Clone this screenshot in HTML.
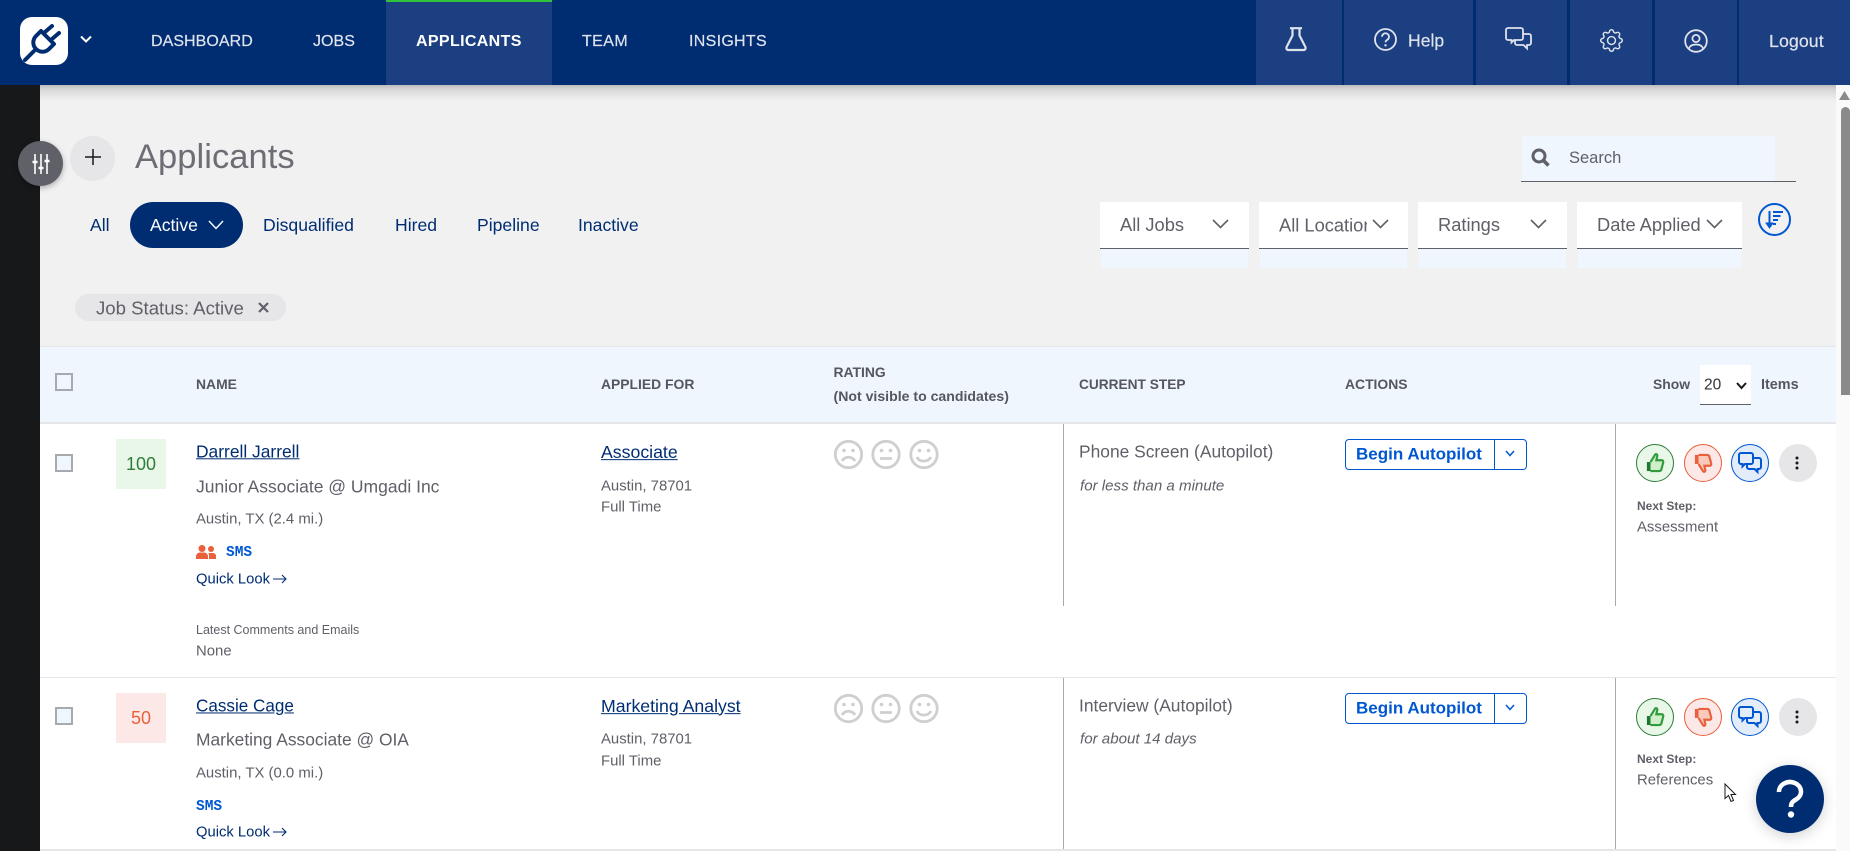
<!DOCTYPE html>
<html><head><meta charset="utf-8"><title>Applicants</title>
<style>
html,body{margin:0;padding:0;width:1850px;height:851px;overflow:hidden;background:#f1f1f1;font-family:"Liberation Sans",sans-serif;color:#5f6068}
.a{position:absolute}
.t{position:absolute;white-space:nowrap;line-height:1;transform:translateY(-50%)}
.n{font-size:16px;color:#dfe3ec;top:42px;letter-spacing:.05px;-webkit-text-stroke:.2px #dfe3ec}
.tab{font-size:17.6px;color:#002d72;top:225.5px}
.dd{position:absolute;top:202px;height:46px;background:#fff;border-bottom:1px solid #5f6068}
.pale{position:absolute;top:249px;height:19px;background:#f0f6fe}
.dt{font-size:18.3px;top:225px;color:#5f6068}
.th{font-size:13.9px;font-weight:bold;color:#55565e}
.lnk{color:#002d72;text-decoration:underline;font-size:17.4px}
.sub{font-size:14.9px;color:#5f6068;margin-top:1px}
.cb{position:absolute;left:55px;width:14px;height:14px;border:2px solid #a8a9ad;background:#f0f6fe}
.sc{position:absolute;left:116px;width:50px;height:50px;line-height:50px;text-align:center;font-size:18px}
.vl{position:absolute;width:1px;background:#a8a9ad}
.sms{font-size:14.5px;font-weight:bold;color:#0057d2;font-family:"Liberation Mono",monospace}
.btn{position:absolute;left:1345px;width:180px;height:29px;border:1.5px solid #0057d2;border-radius:4px;background:#fff;box-sizing:content-box}
svg{position:absolute;display:block;overflow:visible}
.c{position:absolute;width:36px;height:36px;border-radius:50%;border:1.5px solid}
</style></head><body>

<!-- sidebar / header -->
<div class="a" style="left:0;top:85px;width:1850px;height:16px;background:linear-gradient(#bdbdbd,#d9d9d9 30%,#f1f1f1);"></div>
<div class="a" style="left:0;top:85px;width:40px;height:766px;background:#17181a"></div>
<div class="a" style="left:0;top:0;width:1850px;height:85px;background:#002d72"></div>
<div class="a" style="left:386px;top:0;width:166px;height:85px;background:#1b3f80"></div>
<div class="a" style="left:386px;top:0;width:166px;height:2px;background:#2fc23b"></div>
<div class="a" style="left:1256px;top:0;width:594px;height:85px;background:#1b3f80"></div>
<div class="a" style="left:1342px;top:0;width:2px;height:85px;background:#002d72"></div>
<div class="a" style="left:1473px;top:0;width:3px;height:85px;background:#002d72"></div>
<div class="a" style="left:1567px;top:0;width:3px;height:85px;background:#002d72"></div>
<div class="a" style="left:1652px;top:0;width:3px;height:85px;background:#002d72"></div>
<div class="a" style="left:1737px;top:0;width:2px;height:85px;background:#002d72"></div>

<!-- logo -->
<svg style="left:20px;top:17px" width="48" height="48" viewBox="0 0 48 48"><rect width="48" height="48" rx="12" fill="#fff"/><g fill="none" stroke="#002d72" stroke-width="4" stroke-linecap="round" stroke-linejoin="round"><path d="M21 14L34 27L29 32A9 9 0 0 1 16 19Z"/><path d="M25 15L32 9M32 22L39 16M14 34L5 43"/></g></svg>
<svg style="left:80px;top:35px" width="12" height="8" viewBox="0 0 12 8"><path d="M1 1.5L6 6.5L11 1.5" fill="none" stroke="#fff" stroke-width="2"/></svg>

<span class="t n" style="left:151px">DASHBOARD</span>
<span class="t n" style="left:313px">JOBS</span>
<span class="t n" style="left:416px;color:#fff;font-weight:bold;letter-spacing:.35px;-webkit-text-stroke:0">APPLICANTS</span>
<span class="t n" style="left:582px;letter-spacing:.4px">TEAM</span>
<span class="t n" style="left:689px;letter-spacing:.3px">INSIGHTS</span>

<!-- header icons -->
<svg style="left:1285px;top:27px" width="22" height="24" viewBox="0 0 22 24"><path d="M5 1.2H17M7.5 1.2V8.5L1.6 20A2 2 0 0 0 3.4 23H18.6A2 2 0 0 0 20.4 20L14.5 8.5V1.2" fill="none" stroke="#dfe3ec" stroke-width="2.2"/></svg>
<svg style="left:1374px;top:28px" width="23" height="23" viewBox="0 0 23 23"><circle cx="11.5" cy="11.5" r="10.5" fill="none" stroke="#dfe3ec" stroke-width="1.8"/><path d="M8 8.8A3.5 3.5 0 1 1 13.3 11.8C12.2 12.5 11.5 13 11.5 14.3" fill="none" stroke="#dfe3ec" stroke-width="1.8"/><circle cx="11.5" cy="17.3" r="1.2" fill="#dfe3ec"/></svg>
<span class="t n" style="left:1408px;font-size:17.5px;top:41px">Help</span>
<svg style="left:1505px;top:27px" width="27" height="23" viewBox="0 0 27 23"><path d="M3 1H16A2 2 0 0 1 18 3V11A2 2 0 0 1 16 13H9L6.5 15.5V13H3A2 2 0 0 1 1 11V3A2 2 0 0 1 3 1Z" fill="none" stroke="#dfe3ec" stroke-width="1.8"/><path d="M18 7H24A2 2 0 0 1 26 9V16A2 2 0 0 1 24 18H22V21.5L18.5 18H12A2 2 0 0 1 10 16V13.5" fill="none" stroke="#dfe3ec" stroke-width="1.8"/></svg>
<svg style="left:1600px;top:29px" width="23" height="23" viewBox="0 0 16 16" fill="#dfe3ec"><path d="M8 4.754a3.246 3.246 0 1 0 0 6.492 3.246 3.246 0 0 0 0-6.492zM5.754 8a2.246 2.246 0 1 1 4.492 0 2.246 2.246 0 0 1-4.492 0z"/><path d="M9.796 1.343c-.527-1.79-3.065-1.79-3.592 0l-.094.319a.873.873 0 0 1-1.255.52l-.292-.16c-1.64-.892-3.433.902-2.54 2.541l.159.292a.873.873 0 0 1-.52 1.255l-.319.094c-1.79.527-1.79 3.065 0 3.592l.319.094a.873.873 0 0 1 .52 1.255l-.16.292c-.892 1.64.901 3.434 2.541 2.54l.292-.159a.873.873 0 0 1 1.255.52l.094.319c.527 1.79 3.065 1.79 3.592 0l.094-.319a.873.873 0 0 1 1.255-.52l.292.16c1.64.893 3.434-.902 2.54-2.541l-.159-.292a.873.873 0 0 1 .52-1.255l.319-.094c1.79-.527 1.79-3.065 0-3.592l-.319-.094a.873.873 0 0 1-.52-1.255l.16-.292c.893-1.64-.902-3.433-2.541-2.54l-.292.159a.873.873 0 0 1-1.255-.52l-.094-.319zm-2.633.283c.246-.835 1.428-.835 1.674 0l.094.319a1.873 1.873 0 0 0 2.693 1.115l.291-.16c.764-.415 1.6.42 1.184 1.185l-.159.292a1.873 1.873 0 0 0 1.116 2.692l.318.094c.835.246.835 1.428 0 1.674l-.319.094a1.873 1.873 0 0 0-1.115 2.693l.16.291c.415.764-.42 1.6-1.185 1.184l-.291-.159a1.873 1.873 0 0 0-2.693 1.116l-.094.318c-.246.835-1.428.835-1.674 0l-.094-.319a1.873 1.873 0 0 0-2.692-1.115l-.292.16c-.764.415-1.6-.42-1.184-1.185l.159-.291A1.873 1.873 0 0 0 1.945 8.93l-.319-.094c-.835-.246-.835-1.428 0-1.674l.319-.094A1.873 1.873 0 0 0 3.06 4.377l-.16-.292c-.415-.764.42-1.6 1.185-1.184l.292.159a1.873 1.873 0 0 0 2.692-1.115l.094-.319z"/></svg>
<svg style="left:1684px;top:29px" width="24" height="24" viewBox="0 0 24 24" fill="none" stroke="#dfe3ec" stroke-width="1.8"><circle cx="12" cy="12" r="10.8"/><circle cx="12" cy="9.5" r="3.6"/><path d="M5 19.5C6 16 9 15.5 12 15.5S18 16 19 19.5"/></svg>
<span class="t n" style="left:1769px;font-size:17.8px">Logout</span>

<!-- page title -->
<div class="a" style="left:70px;top:136px;width:45px;height:45px;border-radius:50%;background:#e6e6e8"></div>
<svg style="left:85px;top:149px" width="16" height="16"><path d="M8 0V16M0 8H16" stroke="#17181a" stroke-width="1.5"/></svg>
<div class="a" style="left:18px;top:141px;width:45px;height:45px;border-radius:50%;background:#5f6068;box-shadow:0 2px 6px rgba(0,0,0,.3)"></div>
<svg style="left:32px;top:154px" width="18" height="20" viewBox="0 0 18 20"><path d="M3 0V20M9 0V20M15 0V20" stroke="#fff" stroke-width="1.6"/><path d="M0.5 8H5.5M6.5 14H11.5M12.5 7H17.5" stroke="#fff" stroke-width="2.4"/></svg>
<span class="t" style="left:135px;top:157px;font-size:34.5px;color:#6d6e75;letter-spacing:.05px">Applicants</span>

<!-- tabs -->
<span class="t tab" style="left:90px">All</span>
<div class="a" style="left:130px;top:202px;width:113px;height:46px;border-radius:23px;background:#002d72"></div>
<span class="t tab" style="left:150px;color:#fff">Active</span>
<svg style="left:208px;top:220px" width="16" height="10" viewBox="0 0 16 10"><path d="M1 1L8 8.5L15 1" fill="none" stroke="#fff" stroke-width="1.4"/></svg>
<span class="t tab" style="left:263px">Disqualified</span>
<span class="t tab" style="left:395px">Hired</span>
<span class="t tab" style="left:477px">Pipeline</span>
<span class="t tab" style="left:578px">Inactive</span>

<!-- search -->
<div class="a" style="left:1522px;top:136px;width:253px;height:45px;background:#f0f6fe"></div>
<div class="a" style="left:1521px;top:181px;width:275px;height:1px;background:#5f6068"></div>
<svg style="left:1531px;top:148px" width="19" height="19" viewBox="0 0 19 19" fill="none" stroke="#5f6068"><circle cx="8" cy="8" r="6" stroke-width="3"/><path d="M12.5 12.5L17.5 17.5" stroke-width="3.6"/></svg>
<span class="t" style="left:1569px;top:158px;font-size:16.5px">Search</span>

<!-- dropdowns -->
<div class="dd" style="left:1100px;width:149px"></div><div class="pale" style="left:1101px;width:147px"></div>
<div class="dd" style="left:1259px;width:149px"></div><div class="pale" style="left:1260px;width:147px"></div>
<div class="dd" style="left:1418px;width:149px"></div><div class="pale" style="left:1419px;width:147px"></div>
<div class="dd" style="left:1577px;width:165px"></div><div class="pale" style="left:1578px;width:163px"></div>
<span class="t dt" style="left:1120px">All Jobs</span>
<span class="t dt" style="left:1279px;width:88px;overflow:hidden;padding-bottom:3px;margin-top:1.5px">All Locations</span>
<span class="t dt" style="left:1438px">Ratings</span>
<span class="t dt" style="left:1597px">Date Applied</span>
<svg style="left:1212px;top:219px" width="17" height="10" viewBox="0 0 17 10"><path d="M1 1L8.5 8.5L16 1" fill="none" stroke="#5f6068" stroke-width="1.6"/></svg>
<svg style="left:1372px;top:219px" width="17" height="10" viewBox="0 0 17 10"><path d="M1 1L8.5 8.5L16 1" fill="none" stroke="#5f6068" stroke-width="1.6"/></svg>
<svg style="left:1530px;top:219px" width="17" height="10" viewBox="0 0 17 10"><path d="M1 1L8.5 8.5L16 1" fill="none" stroke="#5f6068" stroke-width="1.6"/></svg>
<svg style="left:1706px;top:219px" width="17" height="10" viewBox="0 0 17 10"><path d="M1 1L8.5 8.5L16 1" fill="none" stroke="#5f6068" stroke-width="1.6"/></svg>
<svg style="left:1758px;top:203px" width="33" height="33" viewBox="0 0 33 33" fill="none" stroke="#0057d2"><circle cx="16.5" cy="16.5" r="15.5" stroke-width="2"/><path d="M11.5 8V23" stroke-width="2"/><path d="M8 20L11.5 25L15 20Z" fill="#0057d2" stroke-width="1"/><path d="M15 9H25M15 13H22.5M15 17H20M15 21H18" stroke-width="2"/></svg>

<!-- chip -->
<div class="a" style="left:75px;top:294px;width:211px;height:27px;border-radius:14px;background:#e6e6e8"></div>
<span class="t" style="left:96px;top:308.5px;font-size:18.6px">Job Status: Active</span>
<svg style="left:258px;top:302px" width="11" height="11" viewBox="0 0 11 11"><path d="M1 1L10 10M10 1L1 10" stroke="#5f6068" stroke-width="2.2"/></svg>

<!-- table -->
<div class="a" style="left:40px;top:346px;width:1796px;height:505px;background:#fff"></div>
<div class="a" style="left:40px;top:346px;width:1796px;height:1px;background:#e6e6e8"></div>
<div class="a" style="left:40px;top:347px;width:1796px;height:75px;background:#f0f6fe"></div>
<div class="a" style="left:40px;top:422px;width:1796px;height:2px;background:#e6e6e8"></div>
<div class="a" style="left:40px;top:677px;width:1796px;height:1px;background:#e6e6e8"></div>
<div class="a" style="left:40px;top:849px;width:1796px;height:2px;background:#e6e6e8"></div>

<div class="cb" style="top:373px"></div>
<span class="t th" style="left:196px;top:384.5px">NAME</span>
<span class="t th" style="left:601px;top:384.5px">APPLIED FOR</span>
<span class="t th" style="left:833.5px;top:372.5px">RATING</span>
<span class="t th" style="left:833.5px;top:396px;font-size:14.1px">(Not visible to candidates)</span>
<span class="t th" style="left:1079px;top:384.5px;font-size:13.7px">CURRENT STEP</span>
<span class="t th" style="left:1345px;top:384.5px">ACTIONS</span>
<span class="t th" style="left:1653px;top:384.5px">Show</span>
<div class="a" style="left:1700px;top:365px;width:51px;height:39px;background:#fff;border-bottom:1px solid #5f6068"></div>
<span class="t" style="left:1704px;top:385px;font-size:15.5px;color:#333">20</span>
<svg style="left:1736px;top:382px" width="11" height="8" viewBox="0 0 11 8"><path d="M1 1L5.5 6L10 1" fill="none" stroke="#17181a" stroke-width="2"/></svg>
<span class="t th" style="left:1761px;top:384.5px;font-size:14.4px">Items</span>

<!-- vertical lines -->
<div class="vl" style="left:1063px;top:424px;height:182px"></div>
<div class="vl" style="left:1615px;top:424px;height:182px"></div>
<div class="vl" style="left:1063px;top:678px;height:171px"></div>
<div class="vl" style="left:1615px;top:678px;height:171px"></div>

<!-- row 1 -->
<div class="cb" style="top:454px"></div>
<div class="sc" style="top:439px;background:#e8f7e8;color:#2f7d3c">100</div>
<span class="t lnk" style="left:196px;top:452px">Darrell Jarrell</span>
<span class="t" style="left:196px;top:487px;font-size:17.5px">Junior Associate @ Umgadi Inc</span>
<span class="t sub" style="left:196px;top:519px">Austin, TX (2.4 mi.)</span>
<svg style="left:196px;top:545px" width="20" height="14" viewBox="0 0 20 14" fill="#e8603c"><circle cx="6" cy="3.5" r="3.5"/><circle cx="15" cy="4" r="3"/><path d="M0 14V11A4 4 0 0 1 4 7.5H8A4 4 0 0 1 12 11V14Z"/><path d="M13 14V10.5C13 9.5 12.8 8.8 12.3 8.2L13 8H17A3 3 0 0 1 20 11V14Z"/></svg>
<span class="t sms" style="left:226px;top:553px">SMS</span>
<span class="t" style="left:196px;top:579.5px;font-size:14.8px;color:#002d72">Quick Look</span>
<svg style="left:273px;top:574px" width="14" height="10" viewBox="0 0 14 10"><path d="M0 5H13M9 1L13 5L9 9" fill="none" stroke="#002d72" stroke-width="1.1"/></svg>
<span class="t" style="left:196px;top:630px;font-size:12.5px">Latest Comments and Emails</span>
<span class="t sub" style="left:196px;top:651px">None</span>
<span class="t lnk" style="left:601px;top:452.5px;font-size:17.7px">Associate</span>
<span class="t sub" style="left:601px;top:486px">Austin, 78701</span>
<span class="t sub" style="left:601px;top:507px">Full Time</span>
<svg style="left:834px;top:440px" width="105" height="29" viewBox="0 0 105 29" fill="none" stroke="#cfcfcf" stroke-width="2.8"><circle cx="14.5" cy="14.5" r="13.2"/><circle cx="52" cy="14.5" r="13.2"/><circle cx="90" cy="14.5" r="13.2"/><path d="M8 21C11 16 18 16 21 21M46 18.5H58M83 17C85 22.5 94 22.5 97 17"/><g fill="#cfcfcf" stroke="none"><circle cx="10" cy="10.5" r="1.8"/><circle cx="19" cy="10.5" r="1.8"/><circle cx="47.5" cy="10.5" r="1.8"/><circle cx="56.5" cy="10.5" r="1.8"/><circle cx="85.5" cy="10.5" r="1.8"/><circle cx="94.5" cy="10.5" r="1.8"/></g></svg>
<span class="t" style="left:1079px;top:452px;font-size:17.4px">Phone Screen (Autopilot)</span>
<span class="t sub" style="left:1080px;top:485px;font-style:italic;font-size:15.1px">for less than a minute</span>
<div class="btn" style="top:439px"></div>
<div class="a" style="left:1493.5px;top:440px;width:1.5px;height:29px;background:#0057d2"></div>
<span class="t" style="left:1356px;top:454px;font-size:17px;color:#0057d2;font-weight:bold">Begin Autopilot</span>
<svg style="left:1505px;top:450px" width="10" height="7" viewBox="0 0 10 7"><path d="M1 1L5 5.5L9 1" fill="none" stroke="#0057d2" stroke-width="1.5"/></svg>

<div class="c" style="left:1636px;top:444px;background:#e8f7e8;border-color:#2f7d3c"></div>
<svg style="left:1646px;top:453px" width="18" height="19" viewBox="0 0 20 21"><path d="M1 10H5V20H1Z" fill="#1c7a30"/><path d="M5 10L10 2C11 .5 13 1.5 12.5 3.5L11.5 8H17.5C19 8 19.5 9.5 19 11L17 18.5C16.5 19.8 15.5 20 14.5 20H5" fill="#cfeec9" stroke="#2f9c3c" stroke-width="2.4"/></svg>
<div class="c" style="left:1684px;top:444px;background:#fde8e8;border-color:#e8603c"></div>
<svg style="left:1694px;top:454px" width="18" height="19" viewBox="0 0 20 21"><path d="M1 1H5V11H1Z" fill="#e8603c"/><path d="M5 11L10 19C11 20.5 13 19.5 12.5 17.5L11.5 13H17.5C19 13 19.5 11.5 19 10L17 2.5C16.5 1.2 15.5 1 14.5 1H5" fill="#f9c9bb" stroke="#e8603c" stroke-width="2.4"/></svg>
<div class="c" style="left:1731px;top:444px;background:#e3ecf9;border-color:#0057d2"></div>
<svg style="left:1738px;top:452px" width="24" height="22" viewBox="0 0 24 22" fill="none" stroke="#0057d2" stroke-width="2"><path d="M3 1H13A2 2 0 0 1 15 3V10A2 2 0 0 1 13 12H7L4.5 14.5V12H3A2 2 0 0 1 1 10V3A2 2 0 0 1 3 1Z"/><path d="M15 6H21A2 2 0 0 1 23 8V15A2 2 0 0 1 21 17H19.5V20L16.5 17H11A2 2 0 0 1 9 15V12.5"/></svg>
<div class="a" style="left:1779px;top:444px;width:38px;height:38px;border-radius:50%;background:#e6e6e8"></div>
<svg style="left:1795px;top:456px" width="4" height="14" fill="#17181a"><circle cx="2" cy="2" r="1.5"/><circle cx="2" cy="7" r="1.5"/><circle cx="2" cy="12" r="1.5"/></svg>
<span class="t" style="left:1637px;top:506px;font-size:12px;font-weight:bold">Next Step:</span>
<span class="t sub" style="left:1637px;top:526.5px">Assessment</span>

<!-- row 2 -->
<div class="cb" style="top:707px"></div>
<div class="sc" style="top:693px;background:#fde8e8;color:#e8603c">50</div>
<span class="t lnk" style="left:196px;top:706px;font-size:17.1px">Cassie Cage</span>
<span class="t" style="left:196px;top:740px;font-size:17.4px">Marketing Associate @ OIA</span>
<span class="t sub" style="left:196px;top:773px">Austin, TX (0.0 mi.)</span>
<span class="t sms" style="left:196px;top:807px">SMS</span>
<span class="t" style="left:196px;top:832.5px;font-size:14.8px;color:#002d72">Quick Look</span>
<svg style="left:273px;top:827px" width="14" height="10" viewBox="0 0 14 10"><path d="M0 5H13M9 1L13 5L9 9" fill="none" stroke="#002d72" stroke-width="1.1"/></svg>
<span class="t lnk" style="left:601px;top:706.5px;font-size:17.7px">Marketing Analyst</span>
<span class="t sub" style="left:601px;top:739px">Austin, 78701</span>
<span class="t sub" style="left:601px;top:761px">Full Time</span>
<svg style="left:834px;top:694px" width="105" height="29" viewBox="0 0 105 29" fill="none" stroke="#cfcfcf" stroke-width="2.8"><circle cx="14.5" cy="14.5" r="13.2"/><circle cx="52" cy="14.5" r="13.2"/><circle cx="90" cy="14.5" r="13.2"/><path d="M8 21C11 16 18 16 21 21M46 18.5H58M83 17C85 22.5 94 22.5 97 17"/><g fill="#cfcfcf" stroke="none"><circle cx="10" cy="10.5" r="1.8"/><circle cx="19" cy="10.5" r="1.8"/><circle cx="47.5" cy="10.5" r="1.8"/><circle cx="56.5" cy="10.5" r="1.8"/><circle cx="85.5" cy="10.5" r="1.8"/><circle cx="94.5" cy="10.5" r="1.8"/></g></svg>
<span class="t" style="left:1079px;top:706px;font-size:17.4px">Interview (Autopilot)</span>
<span class="t sub" style="left:1080px;top:738px;font-style:italic;font-size:15.1px">for about 14 days</span>
<div class="btn" style="top:693px"></div>
<div class="a" style="left:1493.5px;top:694px;width:1.5px;height:29px;background:#0057d2"></div>
<span class="t" style="left:1356px;top:708px;font-size:17px;color:#0057d2;font-weight:bold">Begin Autopilot</span>
<svg style="left:1505px;top:704px" width="10" height="7" viewBox="0 0 10 7"><path d="M1 1L5 5.5L9 1" fill="none" stroke="#0057d2" stroke-width="1.5"/></svg>

<div class="c" style="left:1636px;top:698px;background:#e8f7e8;border-color:#2f7d3c"></div>
<svg style="left:1646px;top:707px" width="18" height="19" viewBox="0 0 20 21"><path d="M1 10H5V20H1Z" fill="#1c7a30"/><path d="M5 10L10 2C11 .5 13 1.5 12.5 3.5L11.5 8H17.5C19 8 19.5 9.5 19 11L17 18.5C16.5 19.8 15.5 20 14.5 20H5" fill="#cfeec9" stroke="#2f9c3c" stroke-width="2.4"/></svg>
<div class="c" style="left:1684px;top:698px;background:#fde8e8;border-color:#e8603c"></div>
<svg style="left:1694px;top:708px" width="18" height="19" viewBox="0 0 20 21"><path d="M1 1H5V11H1Z" fill="#e8603c"/><path d="M5 11L10 19C11 20.5 13 19.5 12.5 17.5L11.5 13H17.5C19 13 19.5 11.5 19 10L17 2.5C16.5 1.2 15.5 1 14.5 1H5" fill="#f9c9bb" stroke="#e8603c" stroke-width="2.4"/></svg>
<div class="c" style="left:1731px;top:698px;background:#e3ecf9;border-color:#0057d2"></div>
<svg style="left:1738px;top:706px" width="24" height="22" viewBox="0 0 24 22" fill="none" stroke="#0057d2" stroke-width="2"><path d="M3 1H13A2 2 0 0 1 15 3V10A2 2 0 0 1 13 12H7L4.5 14.5V12H3A2 2 0 0 1 1 10V3A2 2 0 0 1 3 1Z"/><path d="M15 6H21A2 2 0 0 1 23 8V15A2 2 0 0 1 21 17H19.5V20L16.5 17H11A2 2 0 0 1 9 15V12.5"/></svg>
<div class="a" style="left:1779px;top:698px;width:38px;height:38px;border-radius:50%;background:#e6e6e8"></div>
<svg style="left:1795px;top:710px" width="4" height="14" fill="#17181a"><circle cx="2" cy="2" r="1.5"/><circle cx="2" cy="7" r="1.5"/><circle cx="2" cy="12" r="1.5"/></svg>
<span class="t" style="left:1637px;top:759px;font-size:12px;font-weight:bold">Next Step:</span>
<span class="t sub" style="left:1637px;top:779.5px">References</span>

<!-- scrollbar -->
<div class="a" style="left:1836px;top:85px;width:14px;height:766px;background:#fafafa"></div>
<svg style="left:1839px;top:91px" width="11" height="9"><path d="M5.5 0L11 9H0Z" fill="#8a8a8a"/></svg>
<div class="a" style="left:1841px;top:107px;width:9px;height:288px;border-radius:5px 5px 0 0;background:#8a8a8a"></div>

<!-- cursor -->
<svg style="left:1724px;top:783px" width="13" height="20" viewBox="0 0 13 20"><path d="M1 1V15.5L4.5 12.5L7 18.5L9.5 17.5L7 11.5H11.5Z" fill="#fff" stroke="#17181a" stroke-width="1"/></svg>

<!-- help fab -->
<div class="a" style="left:1756px;top:765px;width:68px;height:68px;border-radius:50%;background:#002d72;box-shadow:0 3px 14px rgba(0,0,0,.18)"></div>
<svg style="left:1776px;top:781px" width="30" height="38" viewBox="0 0 30 38"><path d="M3 11A11 9.5 0 1 1 20 18.5C16.5 20.5 15 22 15 26" fill="none" stroke="#fff" stroke-width="4.5"/><circle cx="15" cy="33.5" r="3.2" fill="#fff"/></svg>
</body></html>
